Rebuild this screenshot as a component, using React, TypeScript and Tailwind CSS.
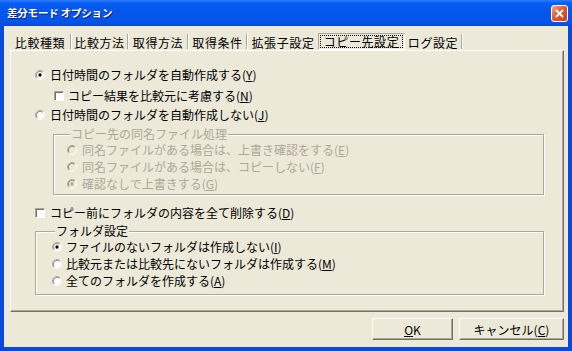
import React from 'react';

const Radio: React.FC<{ checked?: boolean; disabled?: boolean }> = ({ checked, disabled }) => (
    <svg width={10} height={10} viewBox="0 0 12 12" className="shrink-0">
        <circle cx="6" cy="6" r="5" fill={disabled ? '#ECE9D8' : '#fff'} />
        <path d="M9.89 2.11 A5.5 5.5 0 0 0 2.11 9.89" fill="none" stroke="#ACA899" />
        <path d="M2.11 9.89 A5.5 5.5 0 0 0 9.89 2.11" fill="none" stroke="#fff" />
        <path d="M9.18 2.82 A4.5 4.5 0 0 0 2.82 9.18" fill="none" stroke="#716F64" />
        <path d="M2.82 9.18 A4.5 4.5 0 0 0 9.18 2.82" fill="none" stroke="#F1EFE2" />
        {checked && <circle cx="6" cy="6" r="2" fill={disabled ? '#ACA899' : '#000'} />}
    </svg>
);

const Check: React.FC = () => (
    <span className="shrink-0 w-[10px] h-[10px] bg-white border border-t-[#ACA899] border-l-[#ACA899] border-r-white border-b-white shadow-[inset_1px_1px_0_#716F64]" />
);

const tabs = [
    { label: '比較種類', w: 'w-[60px]', sep: true },
    { label: '比較方法', w: 'w-[55px]', sep: true },
    { label: '取得方法', w: 'w-[58px]', sep: true },
    { label: '取得条件', w: 'w-[57px]', sep: true },
    { label: '拡張子設定', w: 'w-[70px]', sep: false },
    { label: 'コピー先設定', w: 'w-[87px]', sep: false, selected: true },
    { label: 'ログ設定', w: 'w-[56px]', sep: true },
];

export default function App() {
    return (
        <div className="w-[572px] h-[351px] flex flex-col font-['Noto_Sans_CJK_JP',sans-serif] text-[12px] text-black select-none">
            {/* title bar */}
            <div className="h-[26px] shrink-0 flex items-center justify-between pl-[7px] pr-[4px] bg-[linear-gradient(to_bottom,#2C7DFF_0%,#0A5DF2_12%,#0356E8_50%,#0355EA_80%,#0A4BD8_100%)]">
                <span className="text-white font-bold text-[10.5px] tracking-[-0.2px] [text-shadow:1px_1px_0_#0A1E7A]">差分モード オプション</span>
                <div className="w-[17px] h-[17px] rounded-[3px] border border-white flex items-center justify-center bg-[linear-gradient(135deg,#F5A487_0%,#E45A34_45%,#C8401C_100%)]">
                    <svg width="9" height="9" viewBox="0 0 9 9">
                        <path d="M1 1 L8 8 M8 1 L1 8" stroke="#fff" strokeWidth="1.8" />
                    </svg>
                </div>
            </div>

            <div className="flex-1 flex flex-col bg-[#ECE9D8] border-x-4 border-b-4 border-[#0B49DA]">
                {/* tabs */}
                <div className="flex h-[17px] mt-[7px] ml-[6px] tracking-[0.6px]">
                    {tabs.map((t) => (
                        <React.Fragment key={t.label}>
                            {t.selected ? (
                                <div className={`${t.w} h-full p-[1px] border border-t-[#ACA899] border-l-[#ACA899] border-r-white border-b-white`}>
                                    <div className="h-full border border-dotted border-black flex items-center justify-center pt-[1px]">{t.label}</div>
                                </div>
                            ) : (
                                <div className={`${t.w} h-full flex items-center justify-center pt-[2px]`}>{t.label}</div>
                            )}
                            {t.sep && <div className="w-[2px] h-[15px] self-center border-l border-l-[#ACA899] border-r border-r-white" />}
                        </React.Fragment>
                    ))}
                </div>

                {/* panel */}
                <div className="ml-[6px] w-[554px] h-[262px] border border-t-white border-l-white border-r-[#716F64] border-b-[#716F64] shadow-[inset_-1px_-1px_0_#ACA899] pt-[15px] pl-[24px] leading-[14px]">
                    <div className="flex items-center h-[18px] gap-[5px]">
                        <Radio checked />
                        <span>日付時間のフォルダを自動作成する(<u>Y</u>)</span>
                    </div>
                    <div className="flex items-center h-[18px] gap-[4px] mt-[3px] ml-[19px]">
                        <Check />
                        <span>コピー結果を比較元に考慮する(<u>N</u>)</span>
                    </div>
                    <div className="flex items-center h-[18px] gap-[5px] mt-[1px]">
                        <Radio />
                        <span>日付時間のフォルダを自動作成しない(<u>J</u>)</span>
                    </div>

                    <fieldset className="ml-[18px] mt-[3px] w-[491px] border border-[#ACA899] shadow-[inset_1px_1px_0_#fff,1px_1px_0_#fff] pl-[13px] pb-[2px] text-[#ACA899]">
                        <legend className="ml-[3px] px-[1px] leading-[14px] bg-[#ECE9D8]">コピー先の同名ファイル処理</legend>
                        <div className="flex items-center h-[17px] gap-[5px]">
                            <Radio disabled />
                            <span>同名ファイルがある場合は、上書き確認をする(<u>E</u>)</span>
                        </div>
                        <div className="flex items-center h-[17px] gap-[5px]">
                            <Radio disabled />
                            <span>同名ファイルがある場合は、コピーしない(<u>F</u>)</span>
                        </div>
                        <div className="flex items-center h-[17px] gap-[5px]">
                            <Radio checked disabled />
                            <span>確認なしで上書きする(<u>G</u>)</span>
                        </div>
                    </fieldset>

                    <div className="flex items-center h-[18px] gap-[5px] mt-[9px]">
                        <Check />
                        <span>コピー前にフォルダの内容を全て削除する(<u>D</u>)</span>
                    </div>

                    <fieldset className="mt-[2px] w-[509px] border border-[#ACA899] shadow-[inset_1px_1px_0_#fff,1px_1px_0_#fff] pl-[16px] pb-[5px]">
                        <legend className="ml-[3px] px-[1px] leading-[14px] bg-[#ECE9D8]">フォルダ設定</legend>
                        <div className="flex items-center h-[17px] gap-[4px]">
                            <Radio checked />
                            <span>ファイルのないフォルダは作成しない(<u>I</u>)</span>
                        </div>
                        <div className="flex items-center h-[17px] gap-[4px]">
                            <Radio />
                            <span>比較元または比較先にないフォルダは作成する(<u>M</u>)</span>
                        </div>
                        <div className="flex items-center h-[17px] gap-[4px]">
                            <Radio />
                            <span>全てのフォルダを作成する(<u>A</u>)</span>
                        </div>
                    </fieldset>
                </div>

                {/* buttons */}
                <div className="flex justify-end gap-[6px] mt-[6px] mr-[4px]">
                    <button className="w-[81px] h-[22px] bg-[#ECE9D8] border border-t-white border-l-white border-r-[#716F64] border-b-[#716F64] shadow-[inset_-1px_-1px_0_#ACA899] leading-none pt-[1px]">
                        <u>O</u>K
                    </button>
                    <button className="w-[105px] h-[22px] bg-[#ECE9D8] border border-t-white border-l-white border-r-[#716F64] border-b-[#716F64] shadow-[inset_-1px_-1px_0_#ACA899] leading-none pt-[1px]">
                        キャンセル(<u>C</u>)
                    </button>
                </div>
            </div>
        </div>
    );
}
